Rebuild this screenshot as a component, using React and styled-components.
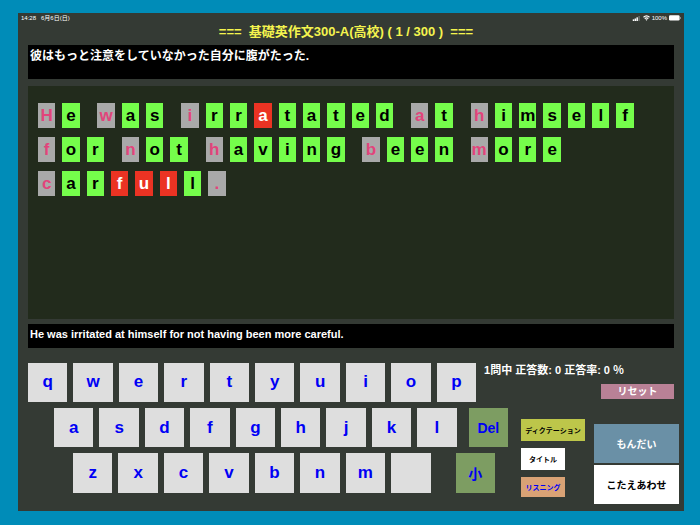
import React from "react";
import styled, { createGlobalStyle } from "styled-components";

const GlobalStyle = createGlobalStyle`
  * {
    box-sizing: border-box;
  }
  body {
    margin: 0;
    background: #008cb8;
    font-family: "Liberation Sans", "Noto Sans CJK JP", sans-serif;
    font-weight: 700;
  }
  button {
    font-family: inherit;
    font-weight: inherit;
    padding: 0;
    border: none;
    cursor: pointer;
  }
  h1, p {
    margin: 0;
    font-weight: inherit;
  }
`;

// g = given letter, o = correct, x = wrong
const answer = [
  [
    ["He", "go"],
    ["was", "goo"],
    ["irratated", "gooxooooo"],
    ["at", "go"],
    ["himself", "goooooo"],
  ],
  [
    ["for", "goo"],
    ["not", "goo"],
    ["having", "gooooo"],
    ["been", "gooo"],
    ["more", "gooo"],
  ],
  [["carfull.", "gooxxxog"]],
];

const tileColors = {
  g: { back: "#a9a9a9", text: "#e2447b" },
  o: { back: "#75fd4b", text: "#000" },
  x: { back: "#eb3323", text: "#fff" },
};

const StatusBar = () => (
  <Status>
    <span>14:28</span>
    <span>6月6日(日)</span>
    <StatusRight>
      <svg width="9" height="5" viewBox="0 0 9 6" fill="#fff" aria-hidden="true">
        <rect x="0" y="4" width="1.8" height="2" />
        <rect x="2.2" y="3" width="1.8" height="3" />
        <rect x="4.4" y="1.6" width="1.8" height="4.4" />
        <rect x="6.8" y="0" width="1.6" height="6" opacity="0.3" />
      </svg>
      <svg width="7" height="6" viewBox="0 0 14 11" fill="none" stroke="#fff" strokeWidth="2.4" aria-hidden="true">
        <path d="M1 4 Q7 -1.5 13 4" />
        <path d="M3.4 6.8 Q7 3.6 10.6 6.8" />
        <path d="M7 10.8 L4.8 8.6 Q7 7 9.2 8.6 Z" fill="#fff" stroke="none" />
      </svg>
      <span>100%</span>
      <svg width="12" height="6" viewBox="0 0 12 6" aria-hidden="true">
        <rect x="0" y="0.3" width="10.6" height="5.2" rx="1.2" fill="#fff" />
        <rect x="11" y="2" width="0.8" height="2" fill="#9a9d9a" />
      </svg>
    </StatusRight>
  </Status>
);

const App = () => {
  return (
    <>
      <GlobalStyle />
      <Screen>
        <StatusBar />
        <Title>===&nbsp; 基礎英作文300-A(高校) ( 1 / 300 )&nbsp; ===</Title>
        <Question lang="ja">彼はもっと注意をしていなかった自分に腹がたった.</Question>
        <Board>
          {answer.map((line, i) => (
            <Line key={i}>
              {line.map(([word, marks], j) => (
                <React.Fragment key={j}>
                  {j > 0 && <Space />}
                  {word.split("").map((letter, k) => (
                    <Cell key={k}>
                      <Tile $mark={marks[k]}>{letter}</Tile>
                    </Cell>
                  ))}
                </React.Fragment>
              ))}
            </Line>
          ))}
        </Board>
        <Result>He was irritated at himself for not having been more careful.</Result>
        <Upper>
          <KeyRow>
            {"qwertyuiop".split("").map((k) => (
              <Key key={k}>{k}</Key>
            ))}
          </KeyRow>
          <Score>
            <p>1問中 正答数: 0 正答率: 0 ％</p>
            <Reset>リセット</Reset>
          </Score>
        </Upper>
        <Lower>
          <Keys>
            <SecondRow>
              {"asdfghjkl".split("").map((k) => (
                <Key key={k}>{k}</Key>
              ))}
              <DelKey>Del</DelKey>
            </SecondRow>
            <ThirdRow>
              {"zxcvbnm".split("").map((k) => (
                <Key key={k}>{k}</Key>
              ))}
              <Key aria-label="スペース" />
              <CaseKey>小</CaseKey>
            </ThirdRow>
          </Keys>
          <Modes>
            <Dictation>ディクテーション</Dictation>
            <ModeButton>タイトル</ModeButton>
            <Listening>リスニング</Listening>
          </Modes>
          <Actions>
            <NextButton>もんだい</NextButton>
            <ActionButton>こたえあわせ</ActionButton>
          </Actions>
        </Lower>
      </Screen>
    </>
  );
};

const Screen = styled.main`
  display: flex;
  flex-direction: column;
  min-height: calc(100vh - 27px);
  margin: 13px 16px 14px 18px;
  padding-bottom: 7px;
  background: #343a34;
`;
const Status = styled.div`
  display: flex;
  gap: 5px;
  align-items: center;
  height: 10px;
  padding: 0 3px;
  color: #fff;
  font-size: 6px;
  line-height: 10px;
  font-weight: 400;
`;
const StatusRight = styled.div`
  display: flex;
  gap: 2px;
  align-items: center;
  margin-left: auto;
`;
const Title = styled.h1`
  height: 22px;
  margin-right: 10px;
  color: #f4f44e;
  font-size: 13px;
  line-height: 18px;
  text-align: center;
`;
const Question = styled.p`
  min-height: 34px;
  margin: 0 10px;
  padding: 2px 2px;
  background: #000;
  color: #fff;
  font-size: 12px;
  line-height: 18px;
`;
const Board = styled.div`
  display: flex;
  flex: 1;
  flex-direction: column;
  gap: 9px;
  margin: 7px 10px 5px;
  padding: 17px 33px 17px 10px;
  background: #222b1c;
`;
const Result = styled.p`
  min-height: 24px;
  margin: 0 10px 15px;
  padding: 2px 2px;
  background: #000;
  color: #fff;
  font-size: 11px;
  line-height: 16px;
`;
/* a full line is 223 units: 9 for a letter, 4 for a space */
const Line = styled.div`
  display: flex;
`;
const Cell = styled.div`
  flex: 0 0 calc(100% * 9 / 223);
  padding-right: 7px;
`;
const Space = styled.div`
  flex: 0 0 calc(100% * 4 / 223);
`;
const Tile = styled.div`
  display: flex;
  justify-content: center;
  height: 25px;
  background: ${(props) => tileColors[props.$mark].back};
  color: ${(props) => tileColors[props.$mark].text};
  font-size: 17px;
  line-height: 25px;
`;
const Upper = styled.div`
  display: grid;
  grid-template-columns: 448fr 198fr;
  margin: 0 10px 6px;
`;
const KeyRow = styled.div`
  display: flex;
  gap: 6px;
`;
const SecondRow = styled(KeyRow)`
  padding-left: 26px;
`;
const ThirdRow = styled(KeyRow)`
  padding: 0 13px 0 45px;
`;
const Key = styled.button`
  flex: 1;
  min-width: 0;
  aspect-ratio: 1;
  background: #dedede;
  color: #0000f5;
  font-size: 17px;
`;
const DelKey = styled(Key)`
  margin-left: 6px;
  background: #7d9d62;
  font-size: 14px;
`;
const CaseKey = styled(DelKey)`
  margin-left: 19px;
`;
const Score = styled.div`
  display: flex;
  flex-direction: column;
  gap: 7px;
  padding-left: 8px;
  color: #fff;
  font-size: 11px;
  line-height: 14px;
  white-space: nowrap;
`;
const Reset = styled.button`
  align-self: flex-end;
  width: 73px;
  height: 15px;
  background: #b98196;
  color: #fff;
  font-size: 10px;
  line-height: 15px;
`;
const Lower = styled.div`
  display: grid;
  grid-template-columns: 493fr 73fr 85fr;
  margin: 0 5px 0 10px;
`;
const Keys = styled.div`
  display: flex;
  flex-direction: column;
  gap: 6px;
  padding-right: 13px;
`;
const Modes = styled.div`
  display: flex;
  flex-direction: column;
  align-items: flex-start;
  gap: 7px;
  padding: 11px 9px 0 0;
`;
const ModeButton = styled.button`
  width: 44px;
  height: 22px;
  background: #fff;
  color: #000;
  font-size: 7px;
  white-space: nowrap;
`;
const Dictation = styled(ModeButton)`
  width: 100%;
  background: #bdc64a;
`;
const Listening = styled(ModeButton)`
  height: 20px;
  background: #d9a275;
  color: #0000f5;
`;
const Actions = styled.div`
  display: flex;
  flex-direction: column;
  gap: 2px;
  padding-top: 16px;
`;
const ActionButton = styled.button`
  height: 39px;
  background: #fff;
  color: #000;
  font-size: 10px;
`;
const NextButton = styled(ActionButton)`
  background: #6a90a6;
  color: #fff;
`;

export default App;
